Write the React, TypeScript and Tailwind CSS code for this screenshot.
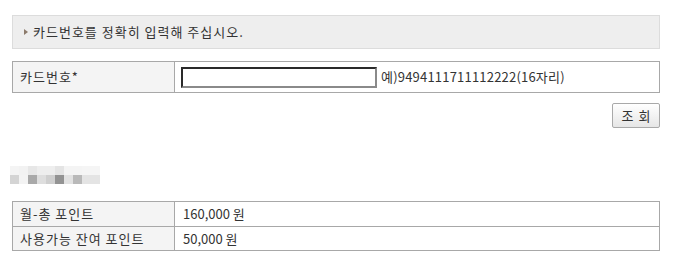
import React from 'react';

const font = { fontFamily: '"Noto Sans CJK KR", "Noto Sans", sans-serif' };

// pixelated (blurred) title, two rows of 10 cells
const blurTop = [
  'bg-[#f4f4f4]', 'bg-[#f2f2f2]', 'bg-[#e7e7e7]', 'bg-[#eeeeee]', 'bg-[#eeeeee]',
  'bg-[#e4e4e4]', 'bg-[#f4f4f4]', 'bg-[#f4f4f4]', 'bg-[#f5f5f5]', 'bg-[#f5f5f5]',
];
const blurBottom = [
  'bg-[#d4d4d4]', 'bg-[#f3f3f3]', 'bg-[#a9a9a9]', 'bg-[#dedede]', 'bg-[#cfcfcf]',
  'bg-[#939393]', 'bg-[#e2e2e2]', 'bg-[#b9b9b9]', 'bg-[#e4e4e4]', 'bg-[#e4e4e4]',
];

function Row({
  label,
  children,
  className = '',
}: {
  label: string;
  children: React.ReactNode;
  className?: string;
}) {
  return (
    <div className={`flex ${className}`}>
      <div className="w-[162px] shrink-0 flex items-center pl-[7px] bg-[#f4f4f4] border-r border-[#a8a8a8] tracking-[1px]">
        {label}
      </div>
      <div className="flex-1 flex items-center pl-[8px]">{children}</div>
    </div>
  );
}

export default function App() {
  return (
    <div
      className="w-[677px] h-[277px] bg-white text-[13px] text-[#333] pt-[15px] pl-[12px]"
      style={font}
    >
      <div className="w-[648px]">
        {/* notice */}
        <div className="h-[34px] flex items-center bg-[#eeeeee] border border-[#dcdcdc] pl-[11px]">
          <span className="w-0 h-0 border-y-[3px] border-y-transparent border-l-[4px] border-l-[#8c7b6b] mr-[4px]" />
          <span className="tracking-[1px] pl-[1px]">카드번호를 정확히 입력해 주십시오.</span>
        </div>

        {/* card number form */}
        <div className="mt-[12px] border border-[#a8a8a8]">
          <Row label="카드번호*" className="h-[30px]">
            <input
              type="text"
              className="w-[196px] h-[21px] ml-[-2px] mt-[1px] border-2 border-t-[#2a2a2a] border-l-[#2a2a2a] border-b-[#8a8a8a] border-r-[#8a8a8a] bg-white outline-none"
            />
            <span className="ml-[4px] tracking-[0.2px]">예)9494111711112222(16자리)</span>
          </Row>
        </div>

        <div className="flex justify-end mt-[10px]">
          <button className="w-[48px] h-[25px] rounded-[2px] border border-[#a9a9a9] bg-gradient-to-b from-white to-[#e6e6e6] text-[13px] text-[#333] tracking-[5px] pl-[5px]">
            조회
          </button>
        </div>

        {/* blurred title */}
        <div className="mt-[38px] ml-[-2px] flex flex-col">
          <div className="flex">
            {blurTop.map((c, i) => (
              <div key={i} className={`w-[9px] h-[9px] ${c}`} />
            ))}
          </div>
          <div className="flex">
            {blurBottom.map((c, i) => (
              <div key={i} className={`w-[9px] h-[9px] ${c}`} />
            ))}
          </div>
        </div>

        {/* points */}
        <div className="mt-[17px] border border-[#a8a8a8]">
          <Row label="월-총 포인트" className="h-[25px] border-b border-[#a8a8a8]">
            160,000 원
          </Row>
          <Row label="사용가능 잔여 포인트" className="h-[23px]">
            50,000 원
          </Row>
        </div>
      </div>
    </div>
  );
}
